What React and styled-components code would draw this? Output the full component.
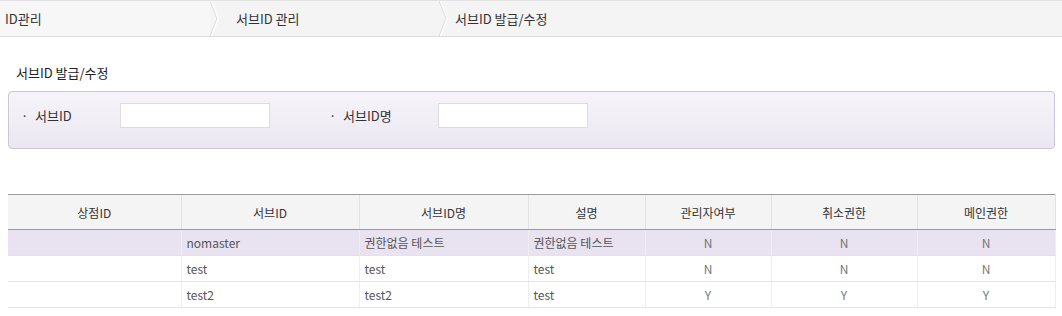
import React from "react"
import styled, {createGlobalStyle} from "styled-components"

const GlobalStyle = createGlobalStyle`
  html, body {
    margin: 0;
    padding: 0;
    background: #fff;
    font-family: "Noto Sans CJK KR", "Noto Sans", sans-serif;
    color: #333;
  }
`

const Page = styled.div`
  width: 1062px;
`

const Breadcrumb = styled.nav`
  display: flex;
  height: 35px;
  border-top: 1px solid #e2e2e2;
  border-bottom: 1px solid #dcdcdc;
  background: #f4f4f4;
`

const Crumb = styled.div`
  display: flex;
  align-items: center;
  width: ${p => p.w};
  padding-left: ${p => p.pad};
  font-size: 13px;
  color: #333;
  background: ${p => p.first ? "#f7f7f7" : "#f4f4f4"};
  box-sizing: border-box;
  flex: ${p => p.last ? 1 : "none"};
`

const Sep = styled.svg`
  flex: none;
  width: 10px;
  height: 35px;
`

const Arrow = () => (
  <Sep viewBox="0 0 10 35">
    <polyline points="1,0 8,17.5 1,35" fill="none" stroke="#ffffff" strokeWidth="2" />
    <polyline points="0,0 7,17.5 0,35" fill="none" stroke="#dadada" strokeWidth="1" />
  </Sep>
)

const Title = styled.h3`
  margin: 28px 0 10px 16px;
  font-size: 13px;
  font-weight: normal;
  line-height: 16px;
  color: #222;
`

const SearchBox = styled.div`
  display: flex;
  align-items: flex-start;
  margin-left: 8px;
  width: 1047px;
  height: 58px;
  box-sizing: border-box;
  padding: 11px 0 0 11px;
  border: 1px solid #cbc7d4;
  border-radius: 4px;
  background: linear-gradient(#f6f4f9, #ebe7f2);
`

const Field = styled.div`
  display: flex;
  align-items: center;
  margin-right: ${p => p.gap || 0};
`

const Label = styled.label`
  width: ${p => p.w};
  font-size: 13px;
  color: #333;
  &::before {
    content: "·";
    display: inline-block;
    width: 15px;
    padding-left: 1px;
    box-sizing: border-box;
  }
`

const Input = styled.input`
  width: 150px;
  height: 25px;
  box-sizing: border-box;
  border: 1px solid #dcdcdc;
  background: #fff;
  outline: none;
`

const Table = styled.table`
  margin: 45px 0 0 8px;
  width: 1047px;
  border-collapse: collapse;
  table-layout: fixed;
  font-size: 12px;
`

const Th = styled.th`
  height: 34px;
  padding: 0;
  font-weight: normal;
  color: #333;
  background: #f4f4f4;
  border-top: 1px solid #999;
  border-bottom: 1px solid #999;
  border-left: 1px solid #e2e2e2;
  &:first-child { border-left: none; }
  &:last-child { border-right: 1px solid #e2e2e2; }
`

const Row = styled.tr`
  background: ${p => p.selected ? "#e8e2f1" : "#fff"};
`

const Td = styled.td`
  height: 25px;
  padding: 0 5px;
  color: ${p => p.center ? "#777" : "#555"};
  text-align: ${p => p.center ? "center" : "left"};
  border-bottom: 1px solid #e4e4e4;
  border-left: 1px solid #eeeeee;
  &:first-child { border-left: none; }
  &:last-child { border-right: 1px solid #eeeeee; }
  white-space: nowrap;
`

const columns = [
  {name: "상점ID", w: 173},
  {name: "서브ID", w: 178},
  {name: "서브ID명", w: 169},
  {name: "설명", w: 117},
  {name: "관리자여부", w: 126},
  {name: "취소권한", w: 146},
  {name: "메인권한", w: 138},
]

const rows = [
  {shop: "", id: "nomaster", name: "권한없음 테스트", desc: "권한없음 테스트", admin: "N", cancel: "N", main: "N", selected: true},
  {shop: "", id: "test", name: "test", desc: "test", admin: "N", cancel: "N", main: "N"},
  {shop: "", id: "test2", name: "test2", desc: "test", admin: "Y", cancel: "Y", main: "Y"},
]

export default function App() {
  return (
    <Page>
      <GlobalStyle />
      <Breadcrumb>
        <Crumb w="210px" pad="5px" first>ID관리</Crumb>
        <Arrow />
        <Crumb w="219px" pad="16px">서브ID 관리</Crumb>
        <Arrow />
        <Crumb pad="6px" last>서브ID 발급/수정</Crumb>
      </Breadcrumb>

      <Title>서브ID 발급/수정</Title>

      <SearchBox>
        <Field gap="58px">
          <Label w="100px">서브ID</Label>
          <Input />
        </Field>
        <Field>
          <Label w="110px">서브ID명</Label>
          <Input />
        </Field>
      </SearchBox>

      <Table>
        <colgroup>
          {columns.map(c => <col key={c.name} style={{width: c.w}} />)}
        </colgroup>
        <thead>
          <tr>
            {columns.map(c => <Th key={c.name}>{c.name}</Th>)}
          </tr>
        </thead>
        <tbody>
          {rows.map((r, i) => (
            <Row key={i} selected={r.selected}>
              <Td>{r.shop}</Td>
              <Td>{r.id}</Td>
              <Td>{r.name}</Td>
              <Td>{r.desc}</Td>
              <Td center>{r.admin}</Td>
              <Td center>{r.cancel}</Td>
              <Td center>{r.main}</Td>
            </Row>
          ))}
        </tbody>
      </Table>
    </Page>
  )
}
